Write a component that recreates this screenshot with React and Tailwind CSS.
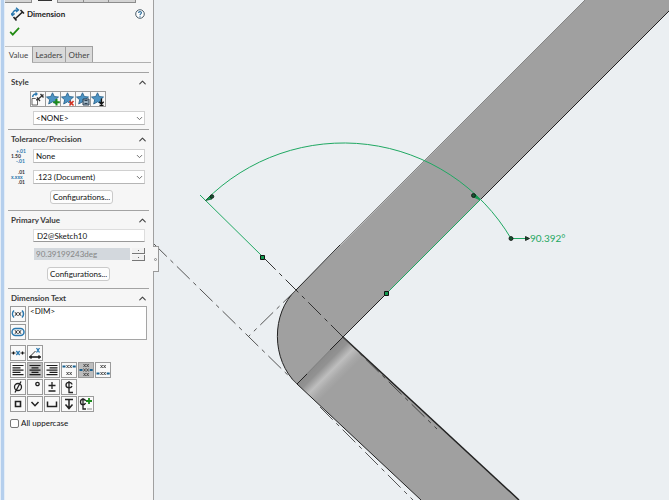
import React from 'react';
import { ChevronDown, ChevronUp } from 'lucide-react';

const STAR = 'M6.500 0.800 8.300 4.600 12.500 5 9.300 7.800 10.300 12 6.500 9.800 2.700 12 3.700 7.800 0.500 5 4.700 4.600Z';

function Svg({ children, size = 14 }) {
  return (
    <svg width={size} height={size} viewBox="0 0 14 14" fill="none" stroke="#222" strokeWidth="1.3" className="shrink-0" aria-hidden="true">
      {children}
    </svg>
  );
}

function Star({ children }) {
  return (
    <Svg>
      <path d={STAR} fill="#4d94c4" stroke="#2b658e" strokeWidth="0.9" />
      {children}
    </Svg>
  );
}

const styleTools = [
  ['Apply default attributes', (
    <Svg>
      <path d="M1 6.500h3.500l2 2V13H1Z" stroke="#555" strokeWidth="0.9" fill="#fff" />
      <path d="M1.500 5C2 2.500 3.500 1.800 5.500 2M4.500 0.500 6 2 4.500 3.500" stroke="#2b78ae" />
      <path d="M5.500 8.500 12.500 2.500M6 5.500l3 3.500M9.500 2l3 3.500" stroke="#333" strokeWidth="1.300" />
    </Svg>
  )],
  ['Add style', <Star><path d="M10.500 7v6.500M7.300 10.300h6.500" stroke="#1c8a1c" strokeWidth="2" /></Star>],
  ['Delete style', <Star><path d="M8.500 9l4 4.500M12.500 9l-4 4.500" stroke="#d8301f" strokeWidth="1.500" /></Star>],
  ['Save style', <Star><path d="M7 7h6v6H7Z" fill="#9db3c2" stroke="#2c3f50" strokeWidth="1" /><path d="M8.500 11.500h3M8.500 8.500h3" stroke="#2c3f50" strokeWidth="1" /></Star>],
  ['Load style', <Star><path d="M10.500 6.500v5.500M8.300 9.700l2.200 2.300 2.200-2.300M8.500 13.300h4" stroke="#111" strokeWidth="1.300" /></Star>],
];

function Lines({ d }) {
  return <Svg><path d={d} stroke="#1b1b1b" strokeWidth="1.200" /></Svg>;
}

const XX = {
  high: 'M4.500 2l2.200 3M6.700 2 4.500 5M7.500 2l2.200 3M9.700 2 7.500 5',
  mid: 'M4.500 5.500l2.200 3M6.700 5.500l-2.200 3M7.500 5.500l2.200 3M9.700 5.500l-2.200 3',
  low: 'M4.500 9l2.200 3M6.700 9l-2.200 3M7.500 9l2.200 3M9.700 9l-2.200 3',
  top: 'M4.500 1l2.200 3M6.700 1 4.500 4M7.500 1l2.200 3M9.700 1 7.500 4',
  bottom: 'M4.500 10l2.200 3M6.700 10l-2.200 3M7.500 10l2.200 3M9.700 10l-2.200 3',
};

function Stack({ marks, dot }) {
  return (
    <Svg>
      {marks.map((m) => <path key={m} d={XX[m]} stroke="#444" strokeWidth="0.9" />)}
      <path d={`M0.500 ${dot}h3M10.700 ${dot}h3`} stroke="#17608f" strokeWidth="1.800" />
    </Svg>
  );
}

const symbolRows = [
  [
    ['Center dimension', <Svg><path d="M5.300 5l3.400 4M8.700 5 5.300 9" stroke="#2b78ae" /><path d="M0.500 7h4M9.500 7h4M2.500 5.500v3M11.500 5.500v3" stroke="#111" strokeWidth="1.200" /></Svg>],
    ['Offset text', <Svg><path d="M1 11h12M3 9.300v3.400M11 9.300v3.400" stroke="#111" /><path d="M3 9.500 7.500 5" stroke="#333" strokeWidth="1" /><path d="M8.500 2l3 4.500M11.500 2l-3 4.500" stroke="#2b78ae" /></Svg>],
  ],
  [
    ['Left justify', <Lines d="M1.500 2.500h11M1.500 4.800h8M1.500 7.100h11M1.500 9.400h8M1.500 11.700h11" />],
    ['Center justify', <Lines d="M1.500 2.500h11M3.500 4.800h7M1.500 7.100h11M3.500 9.400h7M1.500 11.700h11" />, true],
    ['Right justify', <Lines d="M1.500 2.500h11M4.500 4.800h8M1.500 7.100h11M4.500 9.400h8M1.500 11.700h11" />],
    ['Top justify', <Stack marks={['high', 'low']} dot={3.5} />],
    ['Middle justify', <Stack marks={['top', 'mid', 'bottom']} dot={7} />, true],
    ['Bottom justify', <Stack marks={['high', 'low']} dot={10.5} />],
  ],
  [
    ['Diameter', <Svg><circle cx="7" cy="7" r="3.500" /><path d="M4 12.500 10 1.500" /></Svg>],
    ['Degree', <Svg><circle cx="9.500" cy="4" r="1.700" /></Svg>],
    ['Plus/Minus', <Svg><path d="M7 2v7M3.500 5.500h7M3.500 11h7" /></Svg>],
    ['Centerline', <Svg><path d="M10 4.500C9.500 1.500 4 1.500 4 5s5 3.500 6 1M7 1v11.500h4" /></Svg>],
  ],
  [
    ['Square', <Svg><path d="M4.500 4.500h5v5h-5Z" strokeWidth="1.600" /></Svg>],
    ['Countersink', <Svg><path d="M3.500 5 7 8.700 10.500 5" strokeWidth="1.500" /></Svg>],
    ['Counterbore', <Svg><path d="M2.500 4.500v5h9v-5" strokeWidth="1.500" /></Svg>],
    ['Depth', <Svg><path d="M3 2.500h8M7 2.500v9M3.500 7.500 7 11.500 10.500 7.500" strokeWidth="1.500" /></Svg>],
    ['More symbols', <Svg><path d="M6.500 4C6 1.500 1.500 1.500 1.500 5s4 3.500 5 1M4 1v11h3" /><path d="M10 1v6M7 4h6" stroke="#1c8a1c" strokeWidth="1.800" /><path d="M8.500 12h4.500" strokeWidth="1" strokeDasharray="1 1" /></Svg>],
  ],
];

function Tool({ label, pressed, children }) {
  return (
    <button
      type="button"
      aria-label={label}
      aria-pressed={!!pressed}
      className={`flex size-4 items-center justify-center border border-[#9b9b9b] ${pressed ? 'bg-[#bdbdbd]' : 'bg-[#f9f9f9]'}`}
    >
      {children}
    </button>
  );
}

function Section({ title, className, children }) {
  return (
    <section className={`mr-1 ml-[3px] border-t border-[#a3a3a3] ${className}`}>
      <h2 className="mt-[3px] flex h-3 items-center justify-between pr-px pl-[3px] font-bold text-[#3b3b3b]">
        {title}
        <button type="button" aria-label={`Collapse ${title}`}>
          <ChevronUp size={11} color="#444" strokeWidth={2.5} />
        </button>
      </h2>
      {children}
    </section>
  );
}

function Select({ label, value }) {
  return (
    <div className="relative h-[14px] flex-1">
      <select aria-label={label} defaultValue={value} className="block h-full w-full appearance-none border border-[#d0d0d0] border-b-[#b5b5b5] bg-white px-[2px] leading-3 text-[#111]">
        <option>{value}</option>
      </select>
      <ChevronDown size={9} color="#666" strokeWidth={2.5} className="pointer-events-none absolute top-[3px] right-px" />
    </div>
  );
}

function Configurations() {
  return (
    <button type="button" className="h-[14px] w-[63px] rounded-[3px] border border-[#cacaca] bg-[#fdfdfd] leading-3 text-[#111]">
      Configurations...
    </button>
  );
}

function Panel() {
  return (
    <aside className="w-[154px] shrink-0 overflow-hidden border-r border-[#a0a0a0] bg-[#e4edf7]">
      <div className="ml-px h-full border-l-[3px] border-[#b5cfed]">
        <div className="ml-px h-full bg-[#f6f6f6]">
          <div className="flex h-[3px]">
            <div className="w-[27px] border-r border-b border-[#8c8c8c] bg-[#d4d4d4]" />
            <div className="flex w-[25px] justify-center"><div className="h-px w-[14px] bg-[#333]" /></div>
            <div className="w-[27px] border-x border-b border-[#8c8c8c] bg-[#d4d4d4]" />
            <div className="w-[25px] border-r border-b border-[#8c8c8c] bg-[#d4d4d4]" />
            <div className="w-[27px] border-r border-b border-[#8c8c8c] bg-[#d4d4d4]" />
          </div>
          <header className="mt-1 flex h-[14px] items-center pr-2 pl-[6px]">
            <Svg>
              <path d="M1.500 8C1.500 5 3.500 3 6.500 3M5 0.800 7.500 3 5 5M-0.200 6.200 1.500 8.500 3.700 6.500" stroke="#2b78ae" strokeWidth="1.400" />
              <path d="M4 12 11.500 5M2.500 10l3 3.500M9.500 3l3.500 3.500" stroke="#222" strokeWidth="1.600" />
            </Svg>
            <h1 className="ml-[2px] flex-1 font-bold text-[#222]">Dimension</h1>
            <button type="button" aria-label="Help">
              <Svg size={10}>
                <circle cx="7" cy="7" r="6" fill="#fff" stroke="#3d4f5c" />
                <path d="M5 5.500C5 3 9 3 9 5.300 9 7 7 6.800 7 8.800M7 10v1.500" stroke="#2b6d9c" strokeWidth="1.600" />
              </Svg>
            </button>
          </header>
          <button type="button" aria-label="OK" className="mt-[5px] ml-1 block">
            <Svg size={11}><path d="M1.500 7.500 4.800 11 12.800 2.500" stroke="#218a12" strokeWidth="2.200" /></Svg>
          </button>
          <div role="tablist" className="mt-[9px] mr-[2px] flex h-[17px] border-b border-[#b0b0b0] text-[#444]">
            <button type="button" role="tab" aria-selected="true" className="-mb-px w-[27px] border-t border-[#c4c4c4] bg-[#f6f6f6]">Value</button>
            <button type="button" role="tab" aria-selected="false" className="w-[34px] border border-b-0 border-[#a0a0a0] bg-[#dadada]">Leaders</button>
            <button type="button" role="tab" aria-selected="false" className="w-[27px] border border-b-0 border-l-0 border-[#a0a0a0] bg-[#dadada]">Other</button>
          </div>

          <Section title="Style" className="mt-[9px] h-[57px]">
            <div className="mt-[3px] ml-[22px] flex">
              {styleTools.map(([label, icon]) => (
                <div key={label} className="-mr-px"><Tool label={label}>{icon}</Tool></div>
              ))}
            </div>
            <div className="mt-1 mr-1 ml-[25px] flex"><Select label="Style" value="<NONE>" /></div>
          </Section>

          <Section title="Tolerance/Precision" className="h-[81px]">
            <div className="mt-1 mr-1 flex items-center">
              <svg width="25" height="14" viewBox="0 0 25 14" aria-hidden="true" className="shrink-0 overflow-visible text-[5px] font-bold">
                <text x="3" y="9" fill="#333">1.50</text>
                <text x="8" y="4" fill="#2b78ae">+.01</text>
                <text x="8" y="14" fill="#2b78ae">-.01</text>
              </svg>
              <Select label="Tolerance type" value="None" />
            </div>
            <div className="mt-[7px] mr-1 flex items-center">
              <svg width="25" height="14" viewBox="0 0 25 14" aria-hidden="true" className="shrink-0 overflow-visible text-[5px] font-bold">
                <text x="3" y="9" fill="#2b78ae">x.xxx</text>
                <text x="10" y="4" fill="#333">.01</text>
                <text x="10" y="14" fill="#333">.01</text>
              </svg>
              <Select label="Unit precision" value=".123 (Document)" />
            </div>
            <div className="mt-[6px] ml-[42px] flex"><Configurations /></div>
          </Section>

          <Section title="Primary Value" className="h-[78px]">
            <div className="mt-[3px] mr-1 ml-[25px]">
              <input aria-label="Name" defaultValue="D2@Sketch10" className="block h-[13px] w-full border border-[#ddd] border-b-[#999] bg-white px-[3px] text-[#111]" />
            </div>
            <div className="mt-[6px] mr-1 ml-[26px] flex h-[13px] gap-[2px]">
              <input aria-label="Dimension value" disabled defaultValue="90.39199243deg" className="block h-[12px] w-0 flex-1 bg-[#d3d8dd] px-[2px] text-[#858585]" />
              <div className="flex w-[13px] flex-col gap-px">
                <button type="button" aria-label="Increase" className="flex flex-1 items-center justify-center border-r border-b border-[#777] bg-[#f1f1f1]"><span className="size-px bg-[#666]" /></button>
                <button type="button" aria-label="Decrease" className="flex flex-1 items-center justify-center border-r border-b border-[#777] bg-[#f1f1f1]"><span className="size-px bg-[#666]" /></button>
              </div>
            </div>
            <div className="mt-[6px] ml-[39px] flex"><Configurations /></div>
          </Section>

          <Section title="Dimension Text" className="">
            <div className="mt-[2px] mr-[2px] ml-[2px] flex gap-[2px]">
              <div className="flex flex-col gap-[2px]">
                <Tool label="Add parentheses">
                  <Svg><path d="M3 3.500C1 5.500 1 8.500 3 10.500M11 3.500c2 2 2 5 0 7" stroke="#2b78ae" strokeWidth="1.500" /><path d="M4 5.200l2.500 3.600M6.500 5.200 4 8.800M7.500 5.200 10 8.800M10 5.200 7.500 8.800" strokeWidth="0.900" /></Svg>
                </Tool>
                <Tool label="Inspection dimension">
                  <Svg><rect x="1" y="3.500" width="12" height="7" rx="3.500" stroke="#2b78ae" strokeWidth="1.500" /><path d="M4 5.200l2.500 3.600M6.500 5.200 4 8.800M7.500 5.200 10 8.800M10 5.200 7.500 8.800" strokeWidth="0.900" /></Svg>
                </Tool>
              </div>
              <textarea aria-label="Dimension text" defaultValue="<DIM>" className="block h-[34px] min-w-0 flex-1 resize-none border border-[#a5a5a5] bg-white px-px leading-[9px] text-[#111]" />
            </div>
            <div className="mt-[5px] ml-[2px] flex flex-col gap-px">
              {symbolRows.map((row, i) => (
                <div key={i} className="flex gap-px">
                  {row.map(([label, icon, pressed]) => (
                    <Tool key={label} label={label} pressed={pressed}>{icon}</Tool>
                  ))}
                </div>
              ))}
            </div>
            <label className="mt-[5px] ml-[2px] flex h-3 items-center gap-[2px] text-[#111]">
              <input type="checkbox" className="size-[9px] appearance-none rounded-[2px] border border-[#777] bg-white" />
              All uppercase
            </label>
          </Section>
        </div>
      </div>
    </aside>
  );
}

function ModelView() {
  const axis = { stroke: '#555', strokeWidth: 1, strokeDasharray: '18 5 4 5' };
  return (
    <svg viewBox="154 0 515 500" preserveAspectRatio="xMinYMin slice" className="block h-full w-full" fill="none" role="img" aria-label="Bent plate with angular dimension">
      <defs>
        <linearGradient id="bend" gradientUnits="userSpaceOnUse" x1="320" y1="360" x2="340" y2="380">
          <stop offset="0" stopColor="#8b8b8b" />
          <stop offset="0.25" stopColor="#929292" />
          <stop offset="0.55" stopColor="#bebebe" />
          <stop offset="0.8" stopColor="#a9a9a9" />
          <stop offset="1" stopColor="#a0a0a0" />
        </linearGradient>
      </defs>
      <path d="M585 0H680L343 337 297 384C271 360 271 313 296 290Z" fill="#a0a0a0" />
      <path d="M343 337 519 500H421L297 384Z" fill="url(#bend)" />
      <path d="M585 0 340 245" stroke="#858585" />
      <path d="M340 245 296 290C271 313 271 360 297 384L421 500" stroke="#222" />
      <path d="M680 0 343 337" stroke="#222" />
      <path d="M297 384 343 337" stroke="#777" />
      <path d="M297 384 307 374M330 350 343 337" stroke="#222" />
      <path d="M343 337 519 500" stroke="#222" strokeWidth="1.500" />
      <path d="M154 244 297 384M320 407 413 500" {...axis} />
      <path d="M263 257 343 337" {...axis} stroke="#333" />
      <path d="M296 290 248 337" {...axis} />
      <path d="M343 337 437 429" {...axis} stroke="#444" />
      <g stroke="#1fa862">
        <path d="M200 195 263 257M480 200 387 293" />
        <path d="M205.500 200.500A194.500 194.500 0 0 1 511 238.500H526" />
      </g>
      <g fill="#15542f" stroke="#111" strokeWidth="0.800">
        <path d="M205.500 200.500 210 196 212 199Z" fill="#129a50" stroke="#15542f" />
        <circle cx="212" cy="196.500" r="1.800" />
        <path d="M480 200 475.500 194.500 473.500 197Z" fill="#129a50" stroke="#129a50" />
        <circle cx="473.500" cy="195.500" r="2" />
        <circle cx="511" cy="238.500" r="2" />
        <path d="M525.500 236.500 529.500 238.500 525.500 240.500Z" />
      </g>
      <g fill="#129a50" stroke="#111">
        <path d="M260.500 255.500h4v4h-4ZM384.500 291.500h4v4h-4Z" />
      </g>
      <text x="530" y="242" fill="#1fa862" className="text-[10px]">90.392°</text>
    </svg>
  );
}

export default function App() {
  return (
    <div className="flex h-screen overflow-hidden bg-[#ebeff2] font-['Lato','Open_Sans',sans-serif] text-[8px] leading-3">
      <Panel />
      <main className="relative min-w-0 flex-1">
        <ModelView />
        <button type="button" aria-label="Hide panel" className="absolute top-[246px] -left-px flex h-[26px] w-[6px] items-center justify-center border border-l-0 border-[#999] bg-[#f6f6f6]">
          <span className="size-[3px] rounded-full border border-[#888]" />
        </button>
      </main>
    </div>
  );
}
